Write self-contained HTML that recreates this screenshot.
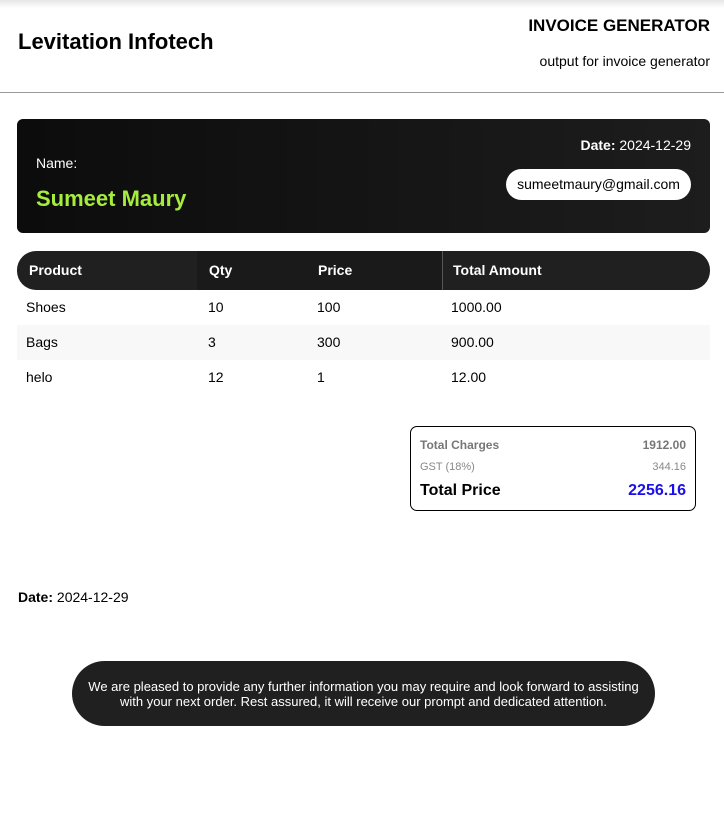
<!DOCTYPE html>
<html><head><style>
body{margin:0;width:724px;height:813px;background:#fff;font-family:"Liberation Sans",sans-serif;position:relative;overflow:hidden;color:#000}
.a{position:absolute;white-space:nowrap}
.shadow{position:absolute;left:0;top:0;width:724px;height:8px;background:linear-gradient(#e6e6e6,#fff)}
</style></head><body>
<div class="shadow"></div>
<div class="a" style="left:18px;top:29px;font-size:22px;font-weight:bold">Levitation Infotech</div>
<div class="a" style="right:14px;top:16px;font-size:17px;font-weight:bold">INVOICE GENERATOR</div>
<div class="a" style="right:14px;top:53px;font-size:14px">output for invoice generator</div>
<div class="a" style="left:0;top:92px;width:724px;height:1px;background:#999"></div>

<div class="a" style="left:17px;top:119px;width:693px;height:114px;border-radius:6px;background:linear-gradient(90deg,#0c0c0c,#1d1d1d)"></div>
<div class="a" style="left:36px;top:155px;font-size:14px;color:#fff">Name:</div>
<div class="a" style="left:36px;top:186px;font-size:22px;font-weight:bold;color:#a6ec3c">Sumeet Maury</div>
<div class="a" style="right:33px;top:137px;font-size:14px;color:#fff"><b>Date:</b> 2024-12-29</div>
<div class="a" style="left:506px;top:169px;width:185px;height:31px;border-radius:16px;background:#fff;font-size:14px;line-height:31px;text-align:center">sumeetmaury@gmail.com</div>

<div class="a" style="left:17px;top:251px;width:693px;height:39px;border-radius:19px;background:#202020;overflow:hidden">
<div class="a" style="left:180px;top:0;width:246px;height:39px;background:#1a1a1a"></div>
<div class="a" style="left:425px;top:0;width:1px;height:39px;background:#555"></div>
</div>
<div class="a" style="left:29px;top:262px;font-size:14px;font-weight:bold;color:#fff">Product</div>
<div class="a" style="left:209px;top:262px;font-size:14px;font-weight:bold;color:#fff">Qty</div>
<div class="a" style="left:318px;top:262px;font-size:14px;font-weight:bold;color:#fff">Price</div>
<div class="a" style="left:453px;top:262px;font-size:14px;font-weight:bold;color:#fff">Total Amount</div>

<div class="a" style="left:17px;top:325px;width:693px;height:35px;background:#f8f8f8"></div>
<div class="a" style="left:26px;top:299px;font-size:14px">Shoes</div>
<div class="a" style="left:208px;top:299px;font-size:14px">10</div>
<div class="a" style="left:317px;top:299px;font-size:14px">100</div>
<div class="a" style="left:451px;top:299px;font-size:14px">1000.00</div>
<div class="a" style="left:26px;top:334px;font-size:14px">Bags</div>
<div class="a" style="left:208px;top:334px;font-size:14px">3</div>
<div class="a" style="left:317px;top:334px;font-size:14px">300</div>
<div class="a" style="left:451px;top:334px;font-size:14px">900.00</div>
<div class="a" style="left:26px;top:369px;font-size:14px">helo</div>
<div class="a" style="left:208px;top:369px;font-size:14px">12</div>
<div class="a" style="left:317px;top:369px;font-size:14px">1</div>
<div class="a" style="left:451px;top:369px;font-size:14px">12.00</div>

<div class="a" style="left:410px;top:426px;width:284px;height:83px;border:1px solid #000;border-radius:7px"></div>
<div class="a" style="left:420px;top:438px;font-size:12px;font-weight:bold;color:#777">Total Charges</div>
<div class="a" style="right:38px;top:438px;font-size:12px;font-weight:bold;color:#777">1912.00</div>
<div class="a" style="left:420px;top:461px;font-size:11px;color:#888">GST (18%)</div>
<div class="a" style="right:38px;top:461px;font-size:11px;color:#888">344.16</div>
<div class="a" style="left:420px;top:482px;font-size:16px;font-weight:bold">Total Price</div>
<div class="a" style="right:38px;top:482px;font-size:16px;font-weight:bold;color:#1a0fe8">2256.16</div>

<div class="a" style="left:18px;top:589px;font-size:14px"><b>Date:</b> 2024-12-29</div>

<div class="a" style="left:72px;top:661px;width:583px;height:65px;border-radius:33px;background:#202020;color:#fff;font-size:13px;text-align:center;white-space:normal;line-height:15px;box-sizing:border-box;padding-top:18px">We are pleased to provide any further information you may require and look forward to assisting<br>with your next order. Rest assured, it will receive our prompt and dedicated attention.</div>
</body></html>
